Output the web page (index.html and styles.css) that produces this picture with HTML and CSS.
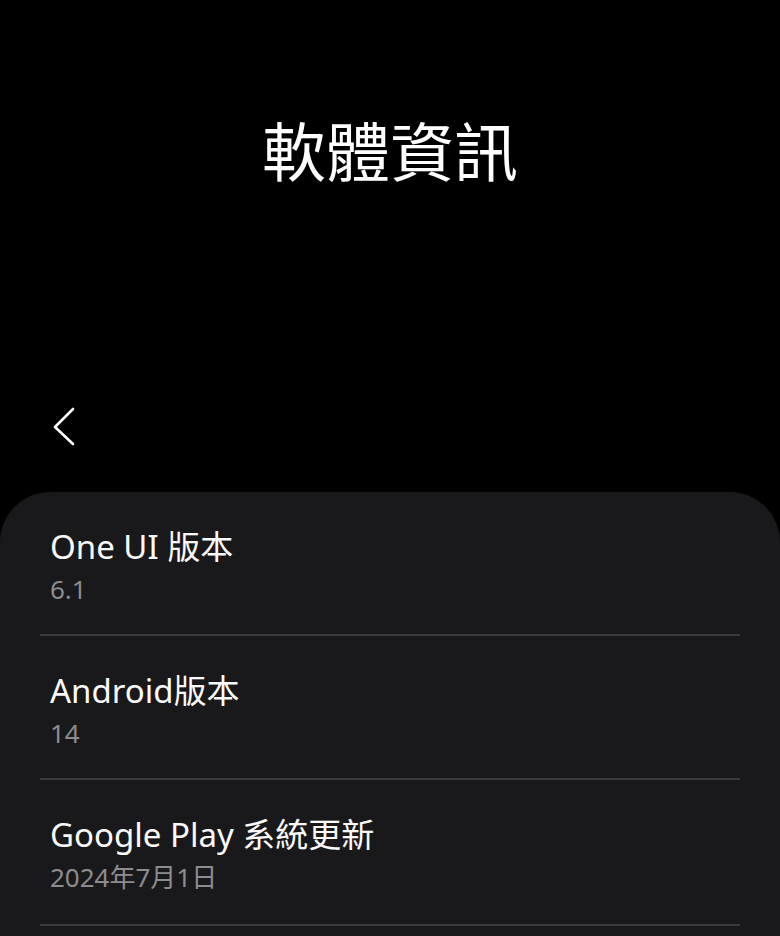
FILE: index.html
```html
<!DOCTYPE html>
<html lang="zh-TW">
<head>
    <meta charset="UTF-8">
    <meta name="viewport" content="width=device-width, initial-scale=1.0">
    <title>軟體資訊</title>
    <link rel="stylesheet" href="styles.css">
</head>
<body>
    <div class="header">
        <h1 class="title">軟體資訊</h1>
        <div class="back">
            <svg width="48" height="48" viewBox="0 0 48 48">
                <polyline points="29,7 11,25 29,42" fill="none" stroke="#fff" stroke-width="2.6" stroke-linecap="round" stroke-linejoin="round"/>
            </svg>
        </div>
    </div>

    <div class="card">
        <ul class="list">
            <li class="item">
                <div class="name">One UI 版本</div>
                <div class="value">6.1</div>
            </li>
            <li class="item">
                <div class="name">Android版本</div>
                <div class="value">14</div>
            </li>
            <li class="item last">
                <div class="name">Google Play 系統更新</div>
                <div class="value">2024年7月1日</div>
            </li>
        </ul>
    </div>
</body>
</html>
```

FILE: styles.css
```css
* {
    padding: 0;
    margin: 0;
    box-sizing: border-box;
}

body {
    width: 780px;
    height: 936px;
    overflow: hidden;
    background-color: #000;
    color: #fff;
    font-family: "Noto Sans", "Noto Sans CJK TC", sans-serif;
}

.header {
    height: 492px;
    display: flex;
    flex-direction: column;
}

.title {
    margin-top: 112px;
    font-size: 64px;
    line-height: 80px;
    font-weight: 400;
    text-align: center;
}

.back {
    width: 48px;
    height: 48px;
    margin-top: 210px;
    margin-left: 44px;
}

.card {
    height: 444px;
    background-color: #19191b;
    border-radius: 50px 50px 0 0;
}

.list {
    list-style: none;
    margin: 0 40px;
}

.item {
    height: 144px;
    padding: 35px 10px 0;
    border-bottom: 2px solid #3a3a3c;
}

.item.last {
    height: 146px;
}

.name {
    font-size: 33px;
    line-height: 40px;
    color: #fafafa;
}

.value {
    margin-top: 6px;
    font-size: 26px;
    line-height: 32px;
    color: #8c8c8e;
}
```
